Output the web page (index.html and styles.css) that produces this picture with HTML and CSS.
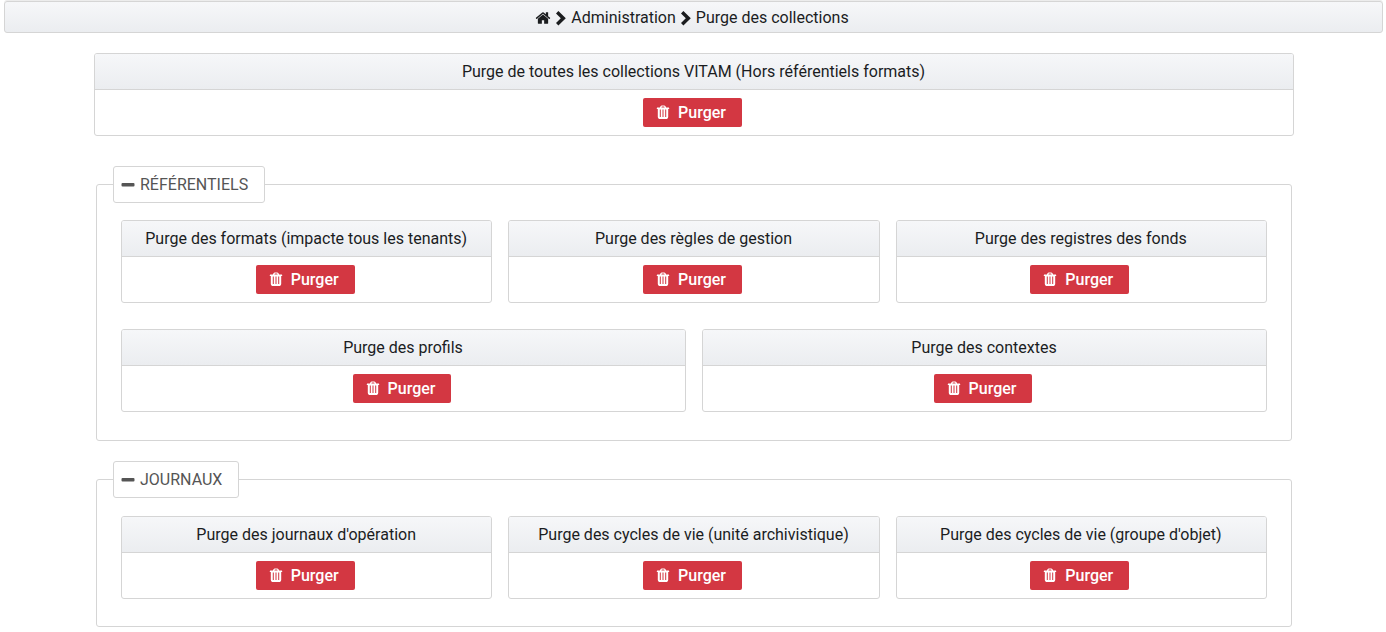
FILE: index.html
```html
<!DOCTYPE html>
<html lang="fr">
<head>
<meta charset="utf-8">
<meta name="viewport" content="width=device-width, initial-scale=1">
<title>Purge des collections</title>
<link rel="stylesheet" href="styles.css">
</head>
<body>
<svg class="sprite" aria-hidden="true">
  <symbol id="home" viewBox="0 0 1792 1792"><path d="M1472 992v480q0 26-19 45t-45 19h-384v-384h-256v384h-384q-26 0-45-19t-19-45v-480q0-1 .5-3t.5-3l575-474 575 474q1 2 1 6zm223-69l-62 74q-8 9-21 11h-3q-13 0-21-7l-692-577-692 577q-12 8-24 7-13-2-21-11l-62-74q-8-10-7-23.500t11-21.500l719-599q32-26 76-26t76 26l244 204v-195q0-14 9-23t23-9h192q14 0 23 9t9 23v408l219 182q10 8 11 21.500t-7 23.500z"/></symbol>
  <symbol id="chevron" viewBox="0 0 12 16"><path d="M1 3.400 3.400 1 10.800 8.200 3.400 15.400 1 13 5.800 8.200z"/></symbol>
  <symbol id="minus" viewBox="0 0 14 16"><rect x="0.500" y="6" width="13" height="3.500" rx="1"/></symbol>
  <symbol id="trash" viewBox="0 0 14 16"><path fill-rule="evenodd" d="M4.500 1.300Q4.900.5 5.800.5h2.400q.9 0 1.300.8l.6 1.200h2.700q.4 0 .4.400v.8q0 .4-.4.400h-.6v8q0 1.800-1.500 1.800H3.300q-1.500 0-1.500-1.800v-8h-.6q-.4 0-.4-.4v-.8q0-.4.400-.4h2.700zM5.400 2.500h3.200l-.5-.9H5.900zM3.800 4.500v7.500h1V4.500zm2.700 0v7.500h1V4.500zm2.700 0v7.500h1V4.500z"/></symbol>
</svg>

<nav class="breadcrumb" aria-label="Fil d'Ariane">
  <a class="crumb" href="#" aria-label="Accueil"><svg class="icon"><use href="#home"/></svg></a>
  <svg class="separator"><use href="#chevron"/></svg>
  <a class="crumb" href="#">Administration</a>
  <svg class="separator"><use href="#chevron"/></svg>
  <a class="crumb" href="#">Purge des collections</a>
</nav>

<main class="content">
  <section class="panel">
    <h2 class="panel-title">Purge de toutes les collections VITAM (Hors référentiels formats)</h2>
    <div class="panel-body"><button class="purge" type="button"><svg class="icon"><use href="#trash"/></svg>Purger</button></div>
  </section>

  <fieldset class="group">
    <legend class="legend"><button class="toggle" type="button" aria-expanded="true"><svg class="icon"><use href="#minus"/></svg>RÉFÉRENTIELS</button></legend>
    <div class="rows">
      <div class="row">
        <section class="panel">
          <h2 class="panel-title">Purge des formats (impacte tous les tenants)</h2>
          <div class="panel-body"><button class="purge" type="button"><svg class="icon"><use href="#trash"/></svg>Purger</button></div>
        </section>
        <section class="panel">
          <h2 class="panel-title">Purge des règles de gestion</h2>
          <div class="panel-body"><button class="purge" type="button"><svg class="icon"><use href="#trash"/></svg>Purger</button></div>
        </section>
        <section class="panel">
          <h2 class="panel-title">Purge des registres des fonds</h2>
          <div class="panel-body"><button class="purge" type="button"><svg class="icon"><use href="#trash"/></svg>Purger</button></div>
        </section>
      </div>
      <div class="row">
        <section class="panel">
          <h2 class="panel-title">Purge des profils</h2>
          <div class="panel-body"><button class="purge" type="button"><svg class="icon"><use href="#trash"/></svg>Purger</button></div>
        </section>
        <section class="panel">
          <h2 class="panel-title">Purge des contextes</h2>
          <div class="panel-body"><button class="purge" type="button"><svg class="icon"><use href="#trash"/></svg>Purger</button></div>
        </section>
      </div>
    </div>
  </fieldset>

  <fieldset class="group">
    <legend class="legend"><button class="toggle" type="button" aria-expanded="true"><svg class="icon"><use href="#minus"/></svg>JOURNAUX</button></legend>
    <div class="rows">
      <div class="row">
        <section class="panel">
          <h2 class="panel-title">Purge des journaux d'opération</h2>
          <div class="panel-body"><button class="purge" type="button"><svg class="icon"><use href="#trash"/></svg>Purger</button></div>
        </section>
        <section class="panel">
          <h2 class="panel-title">Purge des cycles de vie (unité archivistique)</h2>
          <div class="panel-body"><button class="purge" type="button"><svg class="icon"><use href="#trash"/></svg>Purger</button></div>
        </section>
        <section class="panel">
          <h2 class="panel-title">Purge des cycles de vie (groupe d'objet)</h2>
          <div class="panel-body"><button class="purge" type="button"><svg class="icon"><use href="#trash"/></svg>Purger</button></div>
        </section>
      </div>
    </div>
  </fieldset>
</main>
</body>
</html>
```
FILE: styles.css
```css
* {
  box-sizing: border-box;
}

body {
  margin: 0;
  background: #fff;
  color: #1b1d1f;
  font-family: Roboto, "Liberation Sans", sans-serif;
  font-size: 16px;
  line-height: 20px;
}

.sprite {
  display: none;
}

.icon {
  width: 14px;
  height: 16px;
  fill: currentColor;
  flex: none;
}

.breadcrumb {
  display: flex;
  align-items: center;
  justify-content: center;
  gap: 4px;
  margin: 1px 3px 20px 4px;
  padding: 6px 8px 4px 5px;
  border: 1px solid #d5d5d5;
  border-radius: 3px;
  background: linear-gradient(#f6f7f9, #ebedf0);
  box-shadow: 0 -1px #ececec;
}

.crumb {
  display: flex;
  color: inherit;
  text-decoration: none;
}

.crumb .icon {
  width: 16px;
}

.separator {
  width: 12px;
  height: 16px;
  fill: currentColor;
}

.content {
  margin: 0 92px 0 94px;
}

.panel {
  flex: 1;
  border: 1px solid #d5d5d5;
  border-radius: 3px;
  overflow: hidden;
}

.panel-title {
  margin: 0;
  padding: 8px 9px 7px 8px;
  border-bottom: 1px solid #d5d5d5;
  background: linear-gradient(#f6f7f9, #ebedf0);
  font-size: 16px;
  font-weight: 400;
  text-align: center;
}

.panel-body {
  display: flex;
  justify-content: center;
  padding: 8px 11px 8px 8px;
}

.purge {
  display: flex;
  align-items: center;
  gap: 8px;
  height: 29px;
  padding: 0 16px 0 13px;
  border: 0;
  border-radius: 2px;
  background: #d33742;
  color: #fff;
  font: 500 16px/20px Roboto, "Liberation Sans", sans-serif;
}

.group {
  margin: 30px 2px 0;
  padding: 17px 24px 28px;
  border: 1px solid #d5d5d5;
  border-radius: 3px;
}

.group + .group {
  margin-top: 20px;
  padding: 18px 24px 27px;
}

.legend {
  margin-left: -8px;
  padding: 0;
}

.toggle {
  display: flex;
  align-items: center;
  gap: 5px;
  height: 37px;
  padding: 0 16px 0 7px;
  border: 1px solid #d5d5d5;
  border-radius: 3px;
  background: #fff;
  color: #555;
  font: 400 16px/20px Roboto, "Liberation Sans", sans-serif;
}

.rows {
  display: flex;
  flex-direction: column;
  gap: 26px;
}

.row {
  display: flex;
  gap: 16px;
}
```
